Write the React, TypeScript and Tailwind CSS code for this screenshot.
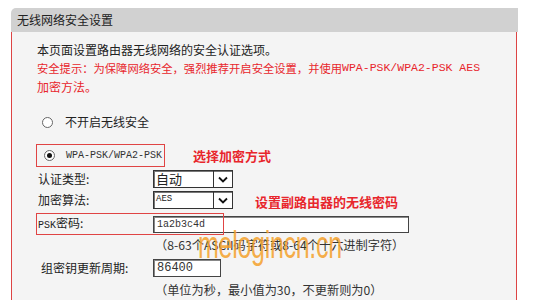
import React from 'react';

const cjk = "font-['Noto_Sans_CJK_SC',sans-serif]";
const mono = "font-['Liberation_Mono','Noto_Sans_CJK_SC',monospace]";

const Radio: React.FC<{ checked?: boolean }> = ({ checked }) => (
    <span className="w-[11px] h-[11px] rounded-full border border-[#666] bg-white flex items-center justify-center shrink-0">
        {checked ? <span className="w-[5px] h-[5px] rounded-full bg-[#111]" /> : null}
    </span>
);

const Select: React.FC<{ value: string; small?: boolean }> = ({ value, small }) => (
    <div className="w-[80px] h-[18px] border border-[#333] bg-white flex items-stretch shadow-[inset_1px_1px_0_#777]">
        <span className={`flex-1 flex items-center pl-[2px] text-[#222] ${small ? `${mono} text-[9px]` : 'text-[13px]'}`}>{value}</span>
        <span className="w-[19px] border-l border-[#333] flex items-center justify-center">
            <svg width="10" height="7" viewBox="0 0 10 7">
                <path d="M1 1.5 L5 5.5 L9 1.5" fill="none" stroke="#111" strokeWidth="1.8" />
            </svg>
        </span>
    </div>
);

export default function App() {
    return (
        <div className={`w-[539px] h-[302px] bg-white pt-2 pl-[11px] overflow-hidden ${cjk}`}>
            <div className="w-[507px] relative">
                {/* Header */}
                <div className="h-6 bg-[#d1d1d1] rounded-tl-[5px] flex items-center pl-[6px] text-[12px] text-[#222]">
                    无线网络安全设置
                </div>

                {/* Body */}
                <div className="h-[268px] w-[506px] bg-[#f4f4f4] border-l border-r border-[#dd4444] pl-[24px] pt-[9px] text-[12px] text-[#222]">
                    <div className="pl-[1px] h-[18px] flex items-center">本页面设置路由器无线网络的安全认证选项。</div>
                    <div className="pl-[1px] h-[18px] flex items-center text-[#e8262c] text-[11.3px] whitespace-nowrap">
                        安全提示：为保障网络安全，强烈推荐开启安全设置，并使用<span className={`${mono} text-[11.5px]`}>WPA-PSK/WPA2-PSK AES</span>
                    </div>
                    <div className="pl-[1px] h-[18px] mt-[1px] flex items-center text-[#e8262c]">加密方法。</div>

                    <div className="h-[20px] mt-4 flex items-center pl-[6px] gap-[12px]">
                        <Radio />
                        <span>不开启无线安全</span>
                    </div>

                    <div className="mt-3 h-[23px] flex items-center">
                        <div className="h-[23px] w-[129px] border border-[#e04444] flex items-center pl-[7px] gap-[11px]">
                            <Radio checked />
                            <span className={`${mono} text-[10px] text-[#333]`}>WPA-PSK/WPA2-PSK</span>
                        </div>
                        <span className="ml-[28px] text-[13px] font-bold text-[#e8262c]">选择加密方式</span>
                    </div>

                    <div className="mt-[3px] h-[18px] flex items-center">
                        <span className="w-[117px] pl-[2px]">认证类型:</span>
                        <Select value="自动" />
                    </div>

                    <div className="mt-[3px] h-[18px] flex items-center">
                        <span className="w-[117px] pl-[2px]">加密算法:</span>
                        <Select value="AES" small />
                        <span className="ml-[22px] mt-[3px] text-[13px] font-bold text-[#e8262c]">设置副路由器的无线密码</span>
                    </div>

                    <div className="mt-[4px] h-[22px] flex items-center relative">
                        <span className={`w-[117px] pl-[2px] ${mono}`}>
                            <span className="text-[10px]">PSK</span><span className={`${cjk} text-[12px]`}>密码:</span>
                        </span>
                        <div className={`w-[256px] h-[17px] border border-[#444] bg-white shadow-[inset_1px_1px_0_#888] flex items-center pl-[3px] ${mono} text-[10px] text-[#333]`}>
                            1a2b3c4d
                        </div>
                        <div className="absolute left-0 top-0 w-[188px] h-[22px] border border-[#e04444] pointer-events-none" />
                    </div>

                    <div className="h-[18px] mt-[1px] pl-[119px] flex items-center text-[12.2px] text-[#333] whitespace-nowrap">
                        （8-63个ASCII码字符或8-64个十六进制字符）
                    </div>

                    <div className="mt-[5px] h-[18px] flex items-center">
                        <span className="w-[117px] pl-[5px]">组密钥更新周期:</span>
                        <div className={`w-[68px] h-[18px] border border-[#444] bg-white shadow-[inset_1px_1px_0_#888] flex items-center pl-[3px] ${mono} text-[12px] text-[#333]`}>
                            86400
                        </div>
                    </div>

                    <div className="h-[18px] mt-[4px] pl-[119px] flex items-center text-[12.2px] text-[#333] whitespace-nowrap">
                        （单位为秒，最小值为30，不更新则为0）
                    </div>
                </div>

                {/* Watermark */}
                <div className="absolute left-[187px] top-[218px] text-[38px] leading-none font-['Liberation_Sans',sans-serif] text-[#f5a02a]/85 scale-x-[0.66] origin-left tracking-[-0.5px] pointer-events-none">
                    melogincn.cn
                </div>
            </div>
        </div>
    );
}
